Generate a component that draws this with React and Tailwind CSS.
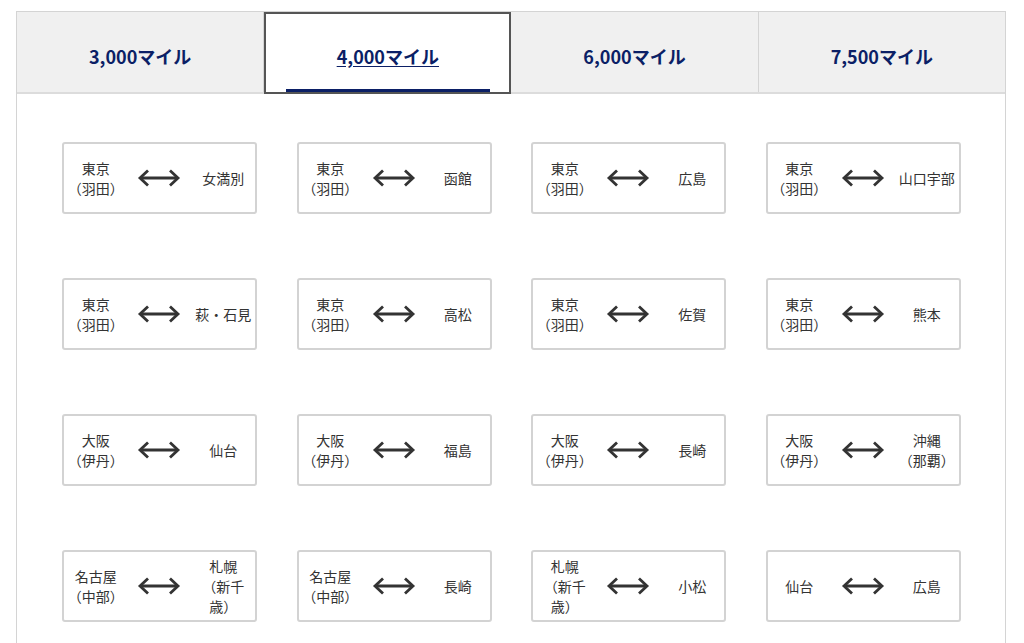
import React from 'react';

const tabs = ['3,000マイル', '4,000マイル', '6,000マイル', '7,500マイル'];

const routes = [
	[['東京', '（羽田）'], ['女満別']],
	[['東京', '（羽田）'], ['函館']],
	[['東京', '（羽田）'], ['広島']],
	[['東京', '（羽田）'], ['山口宇部']],
	[['東京', '（羽田）'], ['萩・石見']],
	[['東京', '（羽田）'], ['高松']],
	[['東京', '（羽田）'], ['佐賀']],
	[['東京', '（羽田）'], ['熊本']],
	[['大阪', '（伊丹）'], ['仙台']],
	[['大阪', '（伊丹）'], ['福島']],
	[['大阪', '（伊丹）'], ['長崎']],
	[['大阪', '（伊丹）'], ['沖縄', '（那覇）']],
	[['名古屋', '（中部）'], ['札幌', '（新千', '歳）']],
	[['名古屋', '（中部）'], ['長崎']],
	[['札幌', '（新千', '歳）'], ['小松']],
	[['仙台'], ['広島']],
];

function Place({ lines }) {
	return (
		<div className="text-center text-[14px] leading-[20px] text-[#333]">
			{lines.map((l, i) => (
				<div key={i}>{l}</div>
			))}
		</div>
	);
}

function Arrow() {
	return (
		<svg width="44" height="20" viewBox="0 0 44 20" className="mx-auto">
			<path d="M3 10 H41" stroke="#333" strokeWidth="2.8" fill="none" />
			<path d="M11 2.5 L3 10 L11 17.5" stroke="#333" strokeWidth="2.8" fill="none" />
			<path d="M33 2.5 L41 10 L33 17.5" stroke="#333" strokeWidth="2.8" fill="none" />
		</svg>
	);
}

export default function App() {
	return (
		<div className="bg-white min-h-screen pt-[11px] pl-4" style={{ fontFamily: '"Noto Sans CJK JP", "Noto Sans", sans-serif' }}>
			<div className="w-[990px] border-x border-t border-[#d4d4d4]">
				<div className="flex h-[82px] bg-[#f0f0f0] border-b-2 border-[#dcdcdc]">
					{tabs.map((t, i) =>
						i === 1 ? (
							<div key={t} className="relative w-[247px] -mb-[2px] bg-white border-2 border-[#555] flex items-center justify-center pt-[6px]">
								<span className="text-[18px] font-bold text-[#0b1f66] underline underline-offset-2">{t}</span>
								<div className="absolute left-[20px] right-[19px] bottom-0 h-[3px] bg-[#0b1f66]" />
							</div>
						) : (
							<div
								key={t}
								className={`flex-1 flex items-center justify-center pt-[8px] ${i === 3 ? '' : 'border-r border-[#d4d4d4]'}`}>
								<span className="text-[18px] font-bold text-[#0b1f66]">{t}</span>
							</div>
						)
					)}
				</div>
				<div className="grid grid-cols-[repeat(4,195px)] gap-x-[39.5px] gap-y-[64px] pl-[45px] pt-[48px] pb-[21px]">
					{routes.map(([a, b], i) => (
						<div key={i} className="h-[72px] border-2 border-[#d3d3d3] rounded-[3px] grid grid-cols-3 items-center">
							<Place lines={a} />
							<Arrow />
							<Place lines={b} />
						</div>
					))}
				</div>
			</div>
		</div>
	);
}
